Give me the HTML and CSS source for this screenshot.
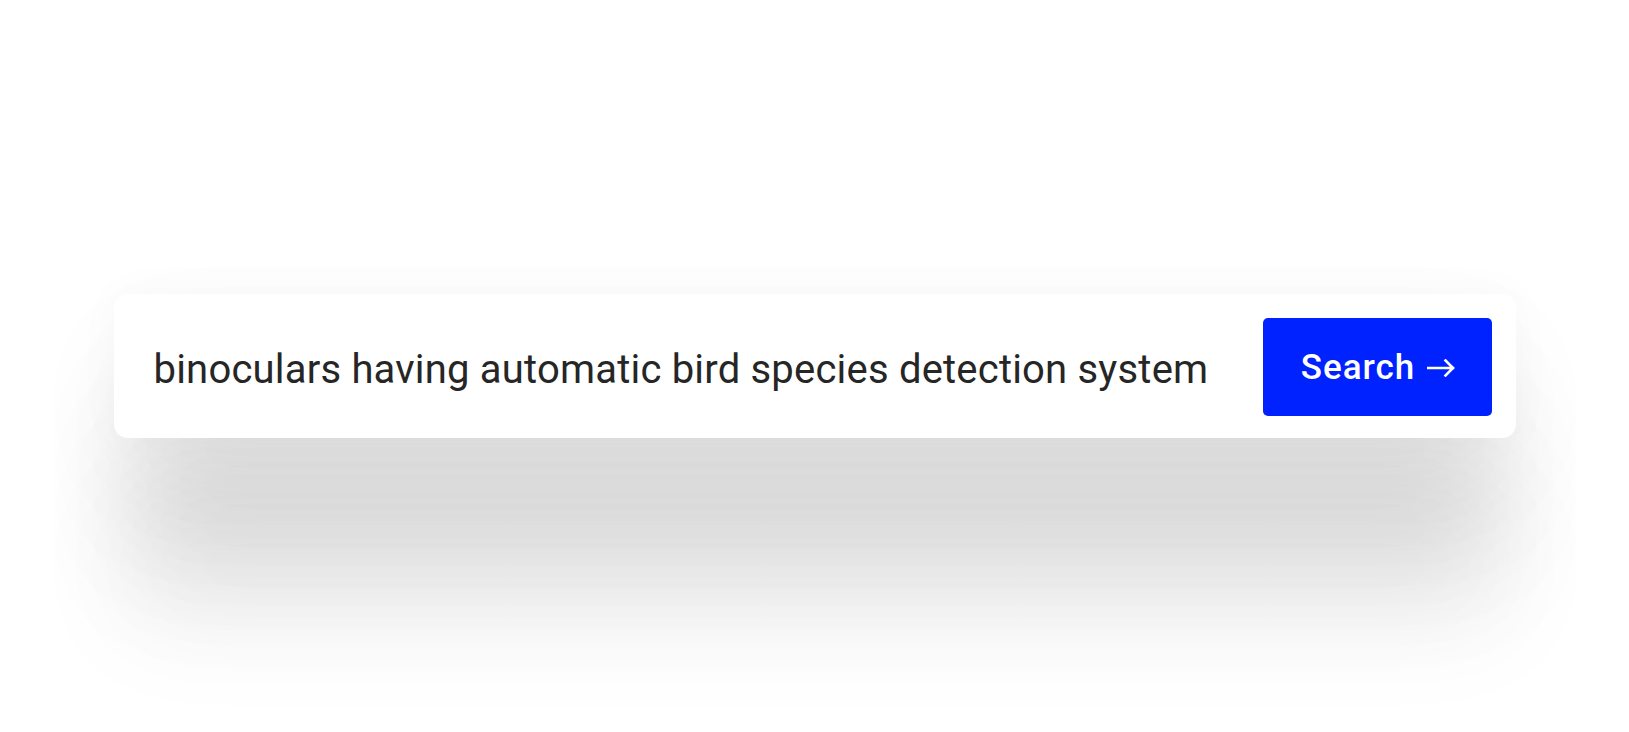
FILE: index.html
```html
<!DOCTYPE html>
<html lang="en">
<head>
<meta charset="utf-8">
<title>Search</title>
<link rel="stylesheet" href="styles.css">
</head>
<body>
<main class="page">
  <form class="search-box" onsubmit="return false">
    <div class="query">binoculars having automatic bird species detection system</div>
    <button class="search-btn" type="submit">
      <span class="btn-label">Search</span>
      <svg class="arrow" width="28" height="18" viewBox="0 0 28 18" aria-hidden="true">
        <path d="M1 9 H26 M18.5 1.5 L26 9 L18.5 16.5" fill="none" stroke="#ffffff" stroke-width="2.6" stroke-linecap="square" stroke-linejoin="miter"/>
      </svg>
    </button>
  </form>
</main>
</body>
</html>
```
FILE: styles.css
```css
html, body {
  margin: 0;
  padding: 0;
  background: #ffffff;
}

.page {
  height: 100vh;
  display: flex;
  align-items: center;
  justify-content: center;
  overflow: hidden;
}

.search-box {
  width: 1402px;
  height: 144px;
  box-sizing: border-box;
  margin: 0;
  padding: 24px 24px 22px 40px;
  background: #ffffff;
  border-radius: 14px;
  display: flex;
  align-items: center;
  justify-content: space-between;
  box-shadow:
    0 0 45px rgba(0, 0, 0, 0.03),
    0 40px 110px -10px rgba(0, 0, 0, 0.056),
    0 80px 110px -10px rgba(0, 0, 0, 0.056),
    0 120px 110px -10px rgba(0, 0, 0, 0.056),
    0 160px 110px -10px rgba(0, 0, 0, 0.056),
    0 200px 110px -10px rgba(0, 0, 0, 0.056);
}

.query {
  font-family: Roboto, "Liberation Sans", sans-serif;
  font-size: 40px;
  letter-spacing: 0.2px;
  color: #262626;
  white-space: nowrap;
  padding-top: 4px;
}

.search-btn {
  width: 229px;
  height: 98px;
  border: none;
  border-radius: 5px;
  background: #0022ff;
  color: #ffffff;
  display: flex;
  align-items: center;
  justify-content: center;
  gap: 12px;
  padding: 0 0 0 2px;
  cursor: pointer;
}

.btn-label {
  font-family: Roboto, "Liberation Sans", sans-serif;
  font-size: 35px;
  font-weight: 500;
  letter-spacing: 1px;
}

.arrow {
  display: block;
  margin-top: 2px;
}
```
